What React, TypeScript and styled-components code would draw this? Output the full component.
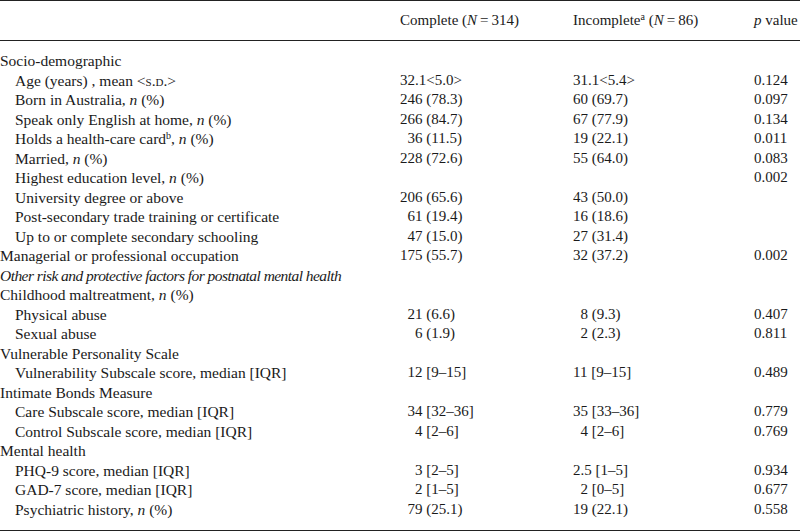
import React from "react";
import styled, { createGlobalStyle } from "styled-components";

const Global = createGlobalStyle`
  html, body { margin: 0; padding: 0; background: #ffffff; }
  body { font-family: "Liberation Serif", "Times New Roman", serif; color: #1a1a1a; }
`;

const Table = styled.table`
  width: 800px;
  border-collapse: collapse;
  table-layout: fixed;
  font-size: 15px;
  border-top: 1px solid #222;
  border-bottom: 1px solid #222;
`;

const HeadRow = styled.tr`
  border-bottom: 1px solid #222;
`;

const HeadCell = styled.th`
  height: 39px;
  padding: 0;
  text-align: left;
  font-weight: normal;
  vertical-align: middle;
  white-space: nowrap;
`;

const Body = styled.tbody`
  tr:first-child td { padding-top: 10px; }
  tr:last-child td { padding-bottom: 11px; }
`;

const Cell = styled.td`
  padding: 0;
  line-height: 19.5px;
  white-space: nowrap;
  vertical-align: top;
`;

const LabelCell = styled(Cell)<{ $indent?: boolean; $italic?: boolean }>`
  padding-left: ${(p) => (p.$indent ? "15px" : "0")};
  font-size: 15.5px;
  font-style: ${(p) => (p.$italic ? "italic" : "normal")};
  letter-spacing: ${(p) => (p.$italic ? "-0.55px" : "0")};
`;

const I = styled.i`
  font-style: italic;
`;

const Sup = styled.sup`
  font-size: 10px;
  line-height: 0;
  vertical-align: 5px;
`;

const SmallCaps = styled.span`
  font-variant: small-caps;
`;

type Row = {
  label: React.ReactNode;
  indent?: boolean;
  italic?: boolean;
  c?: string;
  i?: string;
  p?: string;
};

const n = (
  <>
    , <I>n</I> (%)
  </>
);

const rows: Row[] = [
  { label: "Socio-demographic" },
  {
    label: (
      <>
        Age (years) , mean &lt;<SmallCaps>s.d.</SmallCaps>&gt;
      </>
    ),
    indent: true,
    c: "32.1<5.0>",
    i: "31.1<5.4>",
    p: "0.124",
  },
  { label: <>Born in Australia{n}</>, indent: true, c: "246 (78.3)", i: "60 (69.7)", p: "0.097" },
  { label: <>Speak only English at home{n}</>, indent: true, c: "266 (84.7)", i: "67 (77.9)", p: "0.134" },
  {
    label: (
      <>
        Holds a health-care card<Sup>b</Sup>
        {n}
      </>
    ),
    indent: true,
    c: "\u200736 (11.5)",
    i: "19 (22.1)",
    p: "0.011",
  },
  { label: <>Married{n}</>, indent: true, c: "228 (72.6)", i: "55 (64.0)", p: "0.083" },
  { label: <>Highest education level{n}</>, indent: true, p: "0.002" },
  { label: "University degree or above", indent: true, c: "206 (65.6)", i: "43 (50.0)" },
  { label: "Post-secondary trade training or certificate", indent: true, c: "\u200761 (19.4)", i: "16 (18.6)" },
  { label: "Up to or complete secondary schooling", indent: true, c: "\u200747 (15.0)", i: "27 (31.4)" },
  { label: "Managerial or professional occupation", c: "175 (55.7)", i: "32 (37.2)", p: "0.002" },
  { label: "Other risk and protective factors for postnatal mental health", italic: true },
  { label: <>Childhood maltreatment{n}</> },
  { label: "Physical abuse", indent: true, c: "\u200721 (6.6)", i: "\u20078 (9.3)", p: "0.407" },
  { label: "Sexual abuse", indent: true, c: "\u2007\u20076 (1.9)", i: "\u20072 (2.3)", p: "0.811" },
  { label: "Vulnerable Personality Scale" },
  { label: "Vulnerability Subscale score, median [IQR]", indent: true, c: "\u200712 [9–15]", i: "11 [9–15]", p: "0.489" },
  { label: "Intimate Bonds Measure" },
  { label: "Care Subscale score, median [IQR]", indent: true, c: "\u200734 [32–36]", i: "35 [33–36]", p: "0.779" },
  { label: "Control Subscale score, median [IQR]", indent: true, c: "\u2007\u20074 [2–6]", i: "\u20074 [2–6]", p: "0.769" },
  { label: "Mental health" },
  { label: "PHQ-9 score, median [IQR]", indent: true, c: "\u2007\u20073 [2–5]", i: "2.5 [1–5]", p: "0.934" },
  { label: "GAD-7 score, median [IQR]", indent: true, c: "\u2007\u20072 [1–5]", i: "\u20072 [0–5]", p: "0.677" },
  { label: <>Psychiatric history{n}</>, indent: true, c: "\u200779 (25.1)", i: "19 (22.1)", p: "0.558" },
];

export default function App() {
  return (
    <>
      <Global />
      <Table>
        <colgroup>
          <col style={{ width: 400 }} />
          <col style={{ width: 173 }} />
          <col style={{ width: 181 }} />
          <col style={{ width: 46 }} />
        </colgroup>
        <thead>
          <HeadRow>
            <HeadCell />
            <HeadCell>
              Complete (<I>N</I>{"\u2009=\u2009"}314)
            </HeadCell>
            <HeadCell>
              Incomplete<Sup>a</Sup> (<I>N</I>{"\u2009=\u2009"}86)
            </HeadCell>
            <HeadCell>
              <I>p</I> value
            </HeadCell>
          </HeadRow>
        </thead>
        <Body>
          {rows.map((r, k) => (
            <tr key={k}>
              <LabelCell $indent={r.indent} $italic={r.italic}>
                {r.label}
              </LabelCell>
              <Cell>{r.c}</Cell>
              <Cell>{r.i}</Cell>
              <Cell>{r.p}</Cell>
            </tr>
          ))}
        </Body>
      </Table>
    </>
  );
}
